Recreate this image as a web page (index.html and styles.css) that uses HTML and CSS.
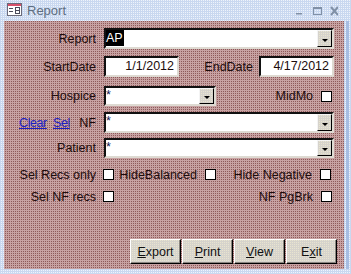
FILE: index.html
```html
<!DOCTYPE html>
<html lang="en">
  <head>
    <meta charset="UTF-8" />
    <title>Report</title>
    <link rel="stylesheet" href="styles.css">
  </head>
  <body>
    <div class="window">
      <div class="titlebar">
        <svg class="app-icon" width="15" height="13" viewBox="0 0 15 13">
          <rect x="0.5" y="0.5" width="14" height="12" fill="#fff" stroke="#6a6a7a" />
          <rect x="1" y="1" width="13" height="2" fill="#d8506a" />
          <path d="M2 5.5h4M2 8.5h4" stroke="#4a4a5a" />
          <rect x="8.5" y="4.5" width="4" height="6" fill="none" stroke="#4a4a5a" />
          <path d="M9 7.5h3" stroke="#4a4a5a" />
        </svg>
        <span class="title">Report</span>
        <svg class="controls" width="42" height="10" viewBox="0 0 42 10">
          <path d="M0 7h6v1.5H0z" fill="#8090a6" />
          <rect x="17.5" y="1.5" width="8" height="7" fill="none" stroke="#8090a6" />
          <path d="M17 1h9v2h-9z" fill="#8090a6" />
          <path d="M35 1l7 8M42 1l-7 8" stroke="#8090a6" stroke-width="2" />
        </svg>
      </div>

      <div class="frame">
        <div class="edge-left"></div>
        <div class="panel">
          <div class="row r1">
            <span class="lbl">Report</span>
            <div class="combo full">
              <span class="val"><span class="sel">AP</span></span>
              <span class="drop"></span>
            </div>
          </div>

          <div class="row r2">
            <span class="lbl">StartDate</span>
            <div class="textbox">1/1/2012</div>
            <span class="lbl-end">EndDate</span>
            <div class="textbox">4/17/2012</div>
          </div>

          <div class="row r3">
            <span class="lbl">Hospice</span>
            <div class="combo short">
              <span class="val">*</span>
              <span class="drop"></span>
            </div>
            <span class="lbl-mid">MidMo</span>
            <span class="check"></span>
          </div>

          <div class="row r4">
            <span class="lbl linkcell">
              <a href="#">Clear</a>
              <a href="#">Sel</a>
              <span>NF</span>
            </span>
            <div class="combo full">
              <span class="val">*</span>
              <span class="drop"></span>
            </div>
          </div>

          <div class="row r5">
            <span class="lbl">Patient</span>
            <div class="combo full">
              <span class="val">*</span>
              <span class="drop"></span>
            </div>
          </div>

          <div class="row r6">
            <span class="lbl">Sel Recs only</span>
            <span class="check first"></span>
            <span class="lbl-bal">HideBalanced</span>
            <span class="check"></span>
            <span class="lbl-neg">Hide Negative</span>
            <span class="check"></span>
          </div>

          <div class="row r7">
            <span class="lbl">Sel NF recs</span>
            <span class="check first"></span>
            <span class="lbl-pg">NF PgBrk</span>
            <span class="check"></span>
          </div>

          <div class="buttons">
            <button><u>E</u>xport</button>
            <button><u>P</u>rint</button>
            <button><u>V</u>iew</button>
            <button>E<u>x</u>it</button>
          </div>
        </div>
        <div class="edge-right"></div>
      </div>
      <div class="edge-bottom"></div>
    </div>
  </body>
</html>
```

FILE: styles.css
```css
body {
  margin: 0;
  font-family: "Liberation Sans", Arial, sans-serif;
  font-size: 12.5px;
  color: #1c0c0c;
}
.window {
  width: 351px;
  height: 274px;
  background-color: #c9d8f0;
  background-image: conic-gradient(#eef3fb 0 25%, transparent 0);
  background-size: 2px 2px;
}

/* titlebar */
.titlebar {
  height: 21px;
  display: flex;
  align-items: center;
  padding-left: 7px;
}
.app-icon {
  margin-top: -2px;
}
.title {
  margin-left: 5px;
  font-size: 13px;
  color: #5f6e80;
}
.controls {
  margin-left: auto;
  margin-right: 13px;
  margin-top: 1px;
}

/* frame */
.frame {
  display: flex;
  height: 248px;
}
.edge-left {
  width: 4px;
}
.edge-right {
  width: 7px;
  background: linear-gradient(to right, transparent 2px, #a7bde2 2px 5px, transparent 5px);
}
.panel {
  width: 340px;
  background-color: #c7a2a2;
  background-image: conic-gradient(#8e5a5a 0 25%, transparent 0);
  background-size: 2px 2px;
}

/* rows */
.row {
  display: flex;
  align-items: center;
}
.r1 { margin-top: 7px; height: 21px; }
.r2 { margin-top: 7px; height: 21px; }
.r3 { margin-top: 9px; height: 20px; }
.r4 { margin-top: 6px; height: 21px; }
.r5 { margin-top: 5px; height: 20px; }
.r6 { margin-top: 9px; height: 15px; }
.r7 { margin-top: 7px; height: 15px; }

.lbl {
  width: 92px;
  margin-right: 8px;
  text-align: right;
  white-space: nowrap;
}
.lbl-end {
  width: 74px;
  margin-right: 6px;
  text-align: right;
}
.lbl-mid {
  width: 97px;
  margin-right: 8px;
  text-align: right;
}
.lbl-bal {
  width: 83px;
  margin-right: 8px;
  text-align: right;
}
.lbl-neg {
  width: 96px;
  margin-right: 8px;
  text-align: right;
  white-space: nowrap;
}
.lbl-pg {
  width: 199px;
  margin-right: 8px;
  text-align: right;
}
.linkcell {
  display: grid;
  grid-template-columns: 34px 1fr auto;
  padding-left: 15px;
  width: 77px;
  text-align: left;
}
.linkcell a {
  color: #1a1ec4;
  letter-spacing: -0.4px;
}

/* controls */
.combo,
.textbox {
  box-sizing: border-box;
  height: 100%;
  background: #fff;
  border-top: 2px solid #111;
  border-left: 2px solid #111;
  border-bottom: 2px solid #dedad2;
  border-right: 2px solid #dedad2;
}
.combo {
  display: flex;
}
.combo.full { width: 230px; }
.combo.short { width: 112px; }
.val {
  flex: 1;
  padding-left: 0;
  line-height: 15px;
  color: #102050;
}
.sel {
  display: inline-block;
  background: #000;
  color: #fff;
  line-height: 16px;
  padding: 0 1px 0 0;
}
.drop {
  box-sizing: border-box;
  width: 15px;
  background-color: #d6d3cc;
  background-image: conic-gradient(#e8e4d0 0 25%, transparent 0);
  background-size: 2px 2px;
  border-top: 1px solid #f4f4f4;
  border-left: 1px solid #f4f4f4;
  border-right: 1px solid #000;
  border-bottom: 1px solid #000;
  display: flex;
  align-items: center;
  justify-content: center;
}
.drop::after {
  content: "";
  margin-top: 3px;
  border-left: 3px solid transparent;
  border-right: 3px solid transparent;
  border-top: 3px solid #000;
}
.textbox {
  width: 75px;
  text-align: right;
  padding-right: 3px;
  line-height: 17px;
}

.check {
  box-sizing: border-box;
  width: 11px;
  height: 11px;
  background: #fff;
  border: 1px solid #000;
}
.check.first {
  margin-left: -1px;
}

/* buttons */
.buttons {
  display: flex;
  gap: 1px;
  margin-top: 35px;
  margin-left: 126px;
}
.buttons button {
  box-sizing: border-box;
  width: 51px;
  height: 25px;
  padding: 0;
  font: inherit;
  color: #111;
  background-color: #d6d3cc;
  background-image: conic-gradient(#e8e4d0 0 25%, transparent 0);
  background-size: 2px 2px;
  border-top: 1px solid #fff;
  border-left: 1px solid #fff;
  border-right: 1px solid #000;
  border-bottom: 1px solid #000;
  box-shadow: inset -1px -1px 0 #8a8680;
}
```
